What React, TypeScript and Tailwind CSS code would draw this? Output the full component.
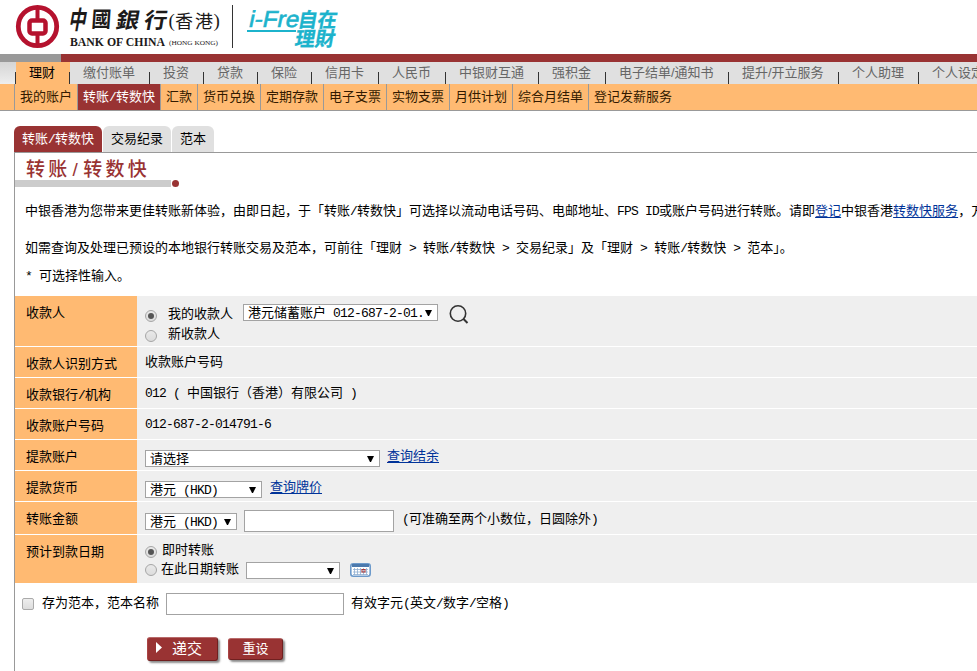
import React from 'react';

const CJK = "font-['Liberation_Sans','Noto_Sans_CJK_SC',sans-serif]";

/* Half-width characters sit on a 7px grid beside the 13px ideographs. */
function T({ children }: { children: string }) {
  const parts = children.split(/([\x20-\x7e]+)/).filter(Boolean);
  return (
    <>
      {parts.map((p, i) =>
        /^[\x20-\x7e]+$/.test(p) ? (
          <span key={i} className="font-['Liberation_Mono',monospace] tracking-[-0.8px]">{p}</span>
        ) : (
          <span key={i}>{p}</span>
        ),
      )}
    </>
  );
}

const mainNav = [
  { label: '理财', w: 'w-[54px]', active: true },
  { label: '缴付账单', w: 'w-[80px]' },
  { label: '投资', w: 'w-[54px]' },
  { label: '贷款', w: 'w-[54px]' },
  { label: '保险', w: 'w-[54px]' },
  { label: '信用卡', w: 'w-[67px]' },
  { label: '人民币', w: 'w-[67px]' },
  { label: '中银财互通', w: 'w-[93px]' },
  { label: '强积金', w: 'w-[67px]' },
  { label: '电子结单/通知书', w: 'w-[123px]' },
  { label: '提升/开立服务', w: 'w-[110px]' },
  { label: '个人助理', w: 'w-[80px]' },
  { label: '个人设定', w: 'w-[80px]' },
];

const subNav = [
  { label: '我的账户', w: 'w-[63px]' },
  { label: '转账/转数快', w: 'w-[83px]', active: true },
  { label: '汇款', w: 'w-[37px]' },
  { label: '货币兑换', w: 'w-[63px]' },
  { label: '定期存款', w: 'w-[63px]' },
  { label: '电子支票', w: 'w-[63px]' },
  { label: '实物支票', w: 'w-[63px]' },
  { label: '月供计划', w: 'w-[63px]' },
  { label: '综合月结单', w: 'w-[76px]' },
  { label: '登记发薪服务', w: 'w-[120px]', last: true },
];

function Logo() {
  return (
    <svg width="350" height="54" viewBox="0 0 350 54" className="block">
      <circle cx="37.5" cy="26.5" r="19.2" fill="none" stroke="#b5122e" strokeWidth="4.8" />
      <rect x="29.5" y="20.5" width="16" height="13" rx="2.5" fill="none" stroke="#b5122e" strokeWidth="4.5" />
      <path d="M37.5 8v11M37.5 35v11" stroke="#b5122e" strokeWidth="4" />
      <g fontFamily="'Noto Sans CJK TC', sans-serif" fill="#1c1a1a">
        <g fontSize="23" fontWeight="700">
          <text transform="translate(68 29) skewX(-10) scale(.76 1.1)">中</text>
          <text transform="translate(91 27) skewX(-4) scale(.86 .94)">國</text>
          <text transform="translate(115 28) skewX(-10) scale(1 .94)">銀</text>
          <text transform="translate(143 28) skewX(-10) scale(1 .94)">行</text>
        </g>
        <text x="175" y="28" fontSize="18" textLength="38" lengthAdjust="spacing">香港</text>
      </g>
      <g fontFamily="'Liberation Serif', serif" fill="#1c1a1a">
        <text x="168.500" y="27" fontSize="19">(</text>
        <text x="213.500" y="27" fontSize="19">)</text>
        <text x="70" y="46" fontSize="11.5" fontWeight="700" textLength="95" lengthAdjust="spacingAndGlyphs">BANK OF CHINA</text>
        <text x="169" y="44.500" fontSize="7" textLength="49" lengthAdjust="spacingAndGlyphs">(HONG KONG)</text>
      </g>
      <path d="M232.5 5v43" stroke="#333" />
      <g fill="#1cb3cc" stroke="#1cb3cc" strokeWidth=".3">
        <text transform="translate(248 27) skewX(-12)" fontFamily="'Liberation Sans', sans-serif" fontSize="23" textLength="50" lengthAdjust="spacingAndGlyphs" strokeWidth=".6">i-Fre</text>
        <g fontFamily="'Noto Sans CJK TC', sans-serif" fontWeight="700" fontSize="20">
          <text transform="translate(297 27) skewX(-10)" textLength="39" lengthAdjust="spacingAndGlyphs">自在</text>
          <text transform="translate(294 46) skewX(-10)" textLength="40" lengthAdjust="spacingAndGlyphs">理財</text>
        </g>
        <path d="M247 31h49" strokeWidth="1.8" fill="none" />
      </g>
    </svg>
  );
}

function Select({ children, w }: { children?: string; w: string }) {
  return (
    <span className={`${w} flex h-[17px] shrink-0 items-center justify-between border border-[#a3a3a3] bg-white pl-[4px] leading-[15px]`}>
      <span className="whitespace-pre"><T>{children ?? ''}</T></span>
      <svg width="7" height="6" viewBox="0 0 7 6" className="mr-[5px] shrink-0"><path d="M0 0h7L4 6H3z" /></svg>
    </span>
  );
}

function Radio({ on }: { on?: boolean }) {
  return (
    <span className="flex size-3 shrink-0 items-center justify-center rounded-full border border-[#a6a6a6] bg-gradient-to-b from-[#e9e9e9] to-[#dcdcdc]">
      {on && <span className="size-[6px] rounded-full bg-[#555]" />}
    </span>
  );
}

function Link({ children }: { children: string }) {
  return <a className="text-[#003399] underline decoration-1 underline-offset-[2px]">{children}</a>;
}

function Row({ label, h, children, last }: { label: string; h: string; children: React.ReactNode; last?: boolean }) {
  return (
    <div className={`flex ${h} ${last ? '' : 'border-b border-white'}`}>
      <div className="w-[122px] shrink-0 bg-[#ffba72] pt-[6px] pl-[11px] leading-[21px]"><T>{label}</T></div>
      <div className="flex-1 bg-[#efefef] pl-2">{children}</div>
    </div>
  );
}

function Button({ children, className, arrow }: { children: string; className: string; arrow?: boolean }) {
  return (
    <button className={`${className} flex items-center justify-center rounded-[3px] border border-t-[#b86a6a] border-r-[#702020] border-b-[#702020] border-l-[#a44] bg-[#993333] text-white shadow-[2px_2px_2px_rgba(0,0,0,0.45)]`}>
      {arrow && <svg width="8" height="11" viewBox="0 0 8 11" className="mr-[9px] -ml-[8px] -mt-[3px]"><path d="M1 0l6 5.5L1 11z" fill="#fff" /></svg>}
      {children}
    </button>
  );
}

export default function App() {
  return (
    <div className={`h-[671px] w-[977px] overflow-hidden bg-white text-[13px] whitespace-nowrap text-black ${CJK}`}>
      <header className="h-[54px]"><Logo /></header>
      <div className="flex h-2">
        <div className="w-[61px] bg-[#999]" />
        <div className="flex-1 bg-[#993333]" />
      </div>

      <nav className="flex h-[22px] overflow-hidden bg-[#e0e0e0] text-[#666]">
        <div className="flex w-4 shrink-0 items-end justify-end bg-gradient-to-b from-[#d5d5d5] to-[#eee]">
          <span className="h-3 w-px bg-[#333]" />
        </div>
        {mainNav.map((n) => (
          <div key={n.label} className={`${n.w} flex shrink-0 items-end justify-between ${n.active ? 'bg-[#ffba72] text-black' : ''}`}>
            <span className="pl-[13px] leading-[22px]">{n.label}</span>
            <span className="h-3 w-px bg-[#333]" />
          </div>
        ))}
      </nav>
      <nav className="flex h-[27px] border-b border-[#999] bg-[#ffba72] leading-[25px]">
        <div className="w-[15px] shrink-0 border-r border-[#999]" />
        {subNav.map((n) => (
          <div key={n.label} className={`${n.w} shrink-0 pl-[5px] ${n.last ? '' : 'border-r border-[#999]'} ${n.active ? 'bg-[#993333] text-white' : 'text-[#331a00]'}`}>
            <T>{n.label}</T>
          </div>
        ))}
      </nav>

      <div className="ml-[14px] flex h-[41px] items-end leading-[25px]">
        <div className="h-[26px] w-[88px] rounded-t-[6px] bg-[#993333] pl-2 text-white"><T>转账/转数快</T></div>
        <div className="ml-[1px] h-[26px] w-[68px] rounded-t-[6px] bg-[#e0e0e0] pl-[8px]">交易纪录</div>
        <div className="ml-[1px] h-[26px] w-[42px] rounded-t-[6px] bg-[#e0e0e0] pl-2">范本</div>
      </div>

      <main className="ml-[14px] h-[519px] border-t border-l border-[#999]">
        <h1 className="h-[27px] pl-[11px] text-[19px] leading-[33px] font-medium tracking-[3.3px] text-[#993333]">转账<span className="px-[2px]">/</span>转数快</h1>
        <div className="flex h-[7px] gap-[1px]">
          <div className="w-[156px] bg-[#ccc]" />
          <div className="size-[7px] rounded-full bg-[#993333]" />
        </div>

        <div className="h-[109px] pl-[10px] leading-5">
          <p className="pt-[14px]">
            <T>中银香港为您带来更佳转账新体验，由即日起，于「转账/转数快」可选择以流动电话号码、电邮地址、FPS ID或账户号码进行转账。请即</T>
            <Link>登记</Link>中银香港<Link>转数快服务</Link>，方便
          </p>
          <p className="pt-4"><T>如需查询及处理已预设的本地银行转账交易及范本，可前往「理财 &gt; 转账/转数快 &gt; 交易纪录」及「理财 &gt; 转账/转数快 &gt; 范本」。</T></p>
          <p className="pt-[7px]"><T>* 可选择性输入。</T></p>
        </div>

        <Row label="收款人" h="h-[51px]">
          <div className="flex h-7 items-start pt-[8px]">
            <span className="mt-[6px]"><Radio on /></span>
            <span className="ml-[11px] w-[75px] leading-5">我的收款人</span>
            <Select w="w-[195px]">港元储蓄账户 012-687-2-01.</Select>
            <svg width="20" height="20" viewBox="0 0 20 20" className="ml-[11px]" fill="none" stroke="#333">
              <circle cx="9" cy="9.5" r="7.7" strokeWidth="1.6" /><path d="M14.5 15l4 4" strokeWidth="2" />
            </svg>
          </div>
          <div className="flex h-5 items-center">
            <span className="mt-[3px]"><Radio /></span><span className="ml-[11px]">新收款人</span>
          </div>
        </Row>
        <Row label="收款人识别方式" h="h-[31px]"><div className="pt-[5px] leading-5">收款账户号码</div></Row>
        <Row label="收款银行/机构" h="h-[31px]"><div className="pt-[5px] leading-5"><T>012 ( 中国银行（香港）有限公司 )</T></div></Row>
        <Row label="收款账户号码" h="h-[31px]"><div className="pt-[5px] leading-5"><T>012-687-2-014791-6</T></div></Row>
        <Row label="提款账户" h="h-[31px]">
          <div className="flex items-start gap-[7px] pt-[6px] leading-5">
            <span className="mt-[4px]"><Select w="w-[235px]">请选择</Select></span><Link>查询结余</Link>
          </div>
        </Row>
        <Row label="提款货币" h="h-[31px]">
          <div className="flex items-start gap-2 pt-[6px] leading-5">
            <span className="mt-[4px]"><Select w="w-[117px]">港元 (HKD)</Select></span><Link>查询牌价</Link>
          </div>
        </Row>
        <Row label="转账金额" h="h-[33px]">
          <div className="flex items-start pt-[8px] leading-[18px]">
            <span className="mt-[3px]"><Select w="w-[92px]">港元 (HKD)</Select></span>
            <span className="ml-[7px] h-[22px] w-[150px] border border-[#a3a3a3] bg-white" />
            <span className="ml-2"><T>(可准确至两个小数位，日圆除外)</T></span>
          </div>
        </Row>
        <Row label="预计到款日期" h="h-[48px]" last>
          <div className="flex h-[25px] items-start pt-[5px] leading-5">
            <span className="mt-[6px]"><Radio on /></span><span className="ml-[5px]">即时转账</span>
          </div>
          <div className="flex items-start leading-[18px]">
            <span className="mt-[4px]"><Radio /></span>
            <span className="ml-[4px] w-[85px]">在此日期转账</span>
            <span className="mt-[2px]"><Select w="w-[94px]" /></span>
            <svg width="21" height="14" viewBox="0 0 21 14" className="mt-[3px] ml-[10px]">
              <rect x=".8" y=".8" width="19.4" height="12.4" rx="2.5" fill="#fff" stroke="#6c9acb" strokeWidth="1.6" />
              <path d="M2 1h17v3H2z" fill="#4b79ad" />
              <path d="M4.5 5v7M7.5 5v7M10.5 5v7M13.5 5v7M16.5 5v7M3 6.5h15M3 9h15M3 11.5h15" stroke="#91afd0" strokeWidth=".8" />
              <rect x="12" y="6.5" width="3" height="2.5" fill="none" stroke="#a33" />
            </svg>
          </div>
        </Row>

        <div className="flex h-[53px] items-start pt-[9px] pl-[7px] leading-[22px]">
          <span className="mt-[6px] size-3 rounded-[2px] border border-[#aaa] bg-gradient-to-b from-[#eee] to-[#ddd]" />
          <span className="ml-[8px] w-[124px]">存为范本，范本名称</span>
          <span className="mt-[1px] h-[22px] w-[178px] border border-[#a3a3a3] bg-white" />
          <span className="ml-[7px]"><T>有效字元(英文/数字/空格)</T></span>
        </div>
        <div className="flex items-start pl-[132px]">
          <Button className="mt-[1px] h-[24px] w-[71px] text-[15px]" arrow>递交</Button>
          <Button className="mt-[2px] ml-[10px] h-[22px] w-[55px]">重设</Button>
        </div>
      </main>
    </div>
  );
}
